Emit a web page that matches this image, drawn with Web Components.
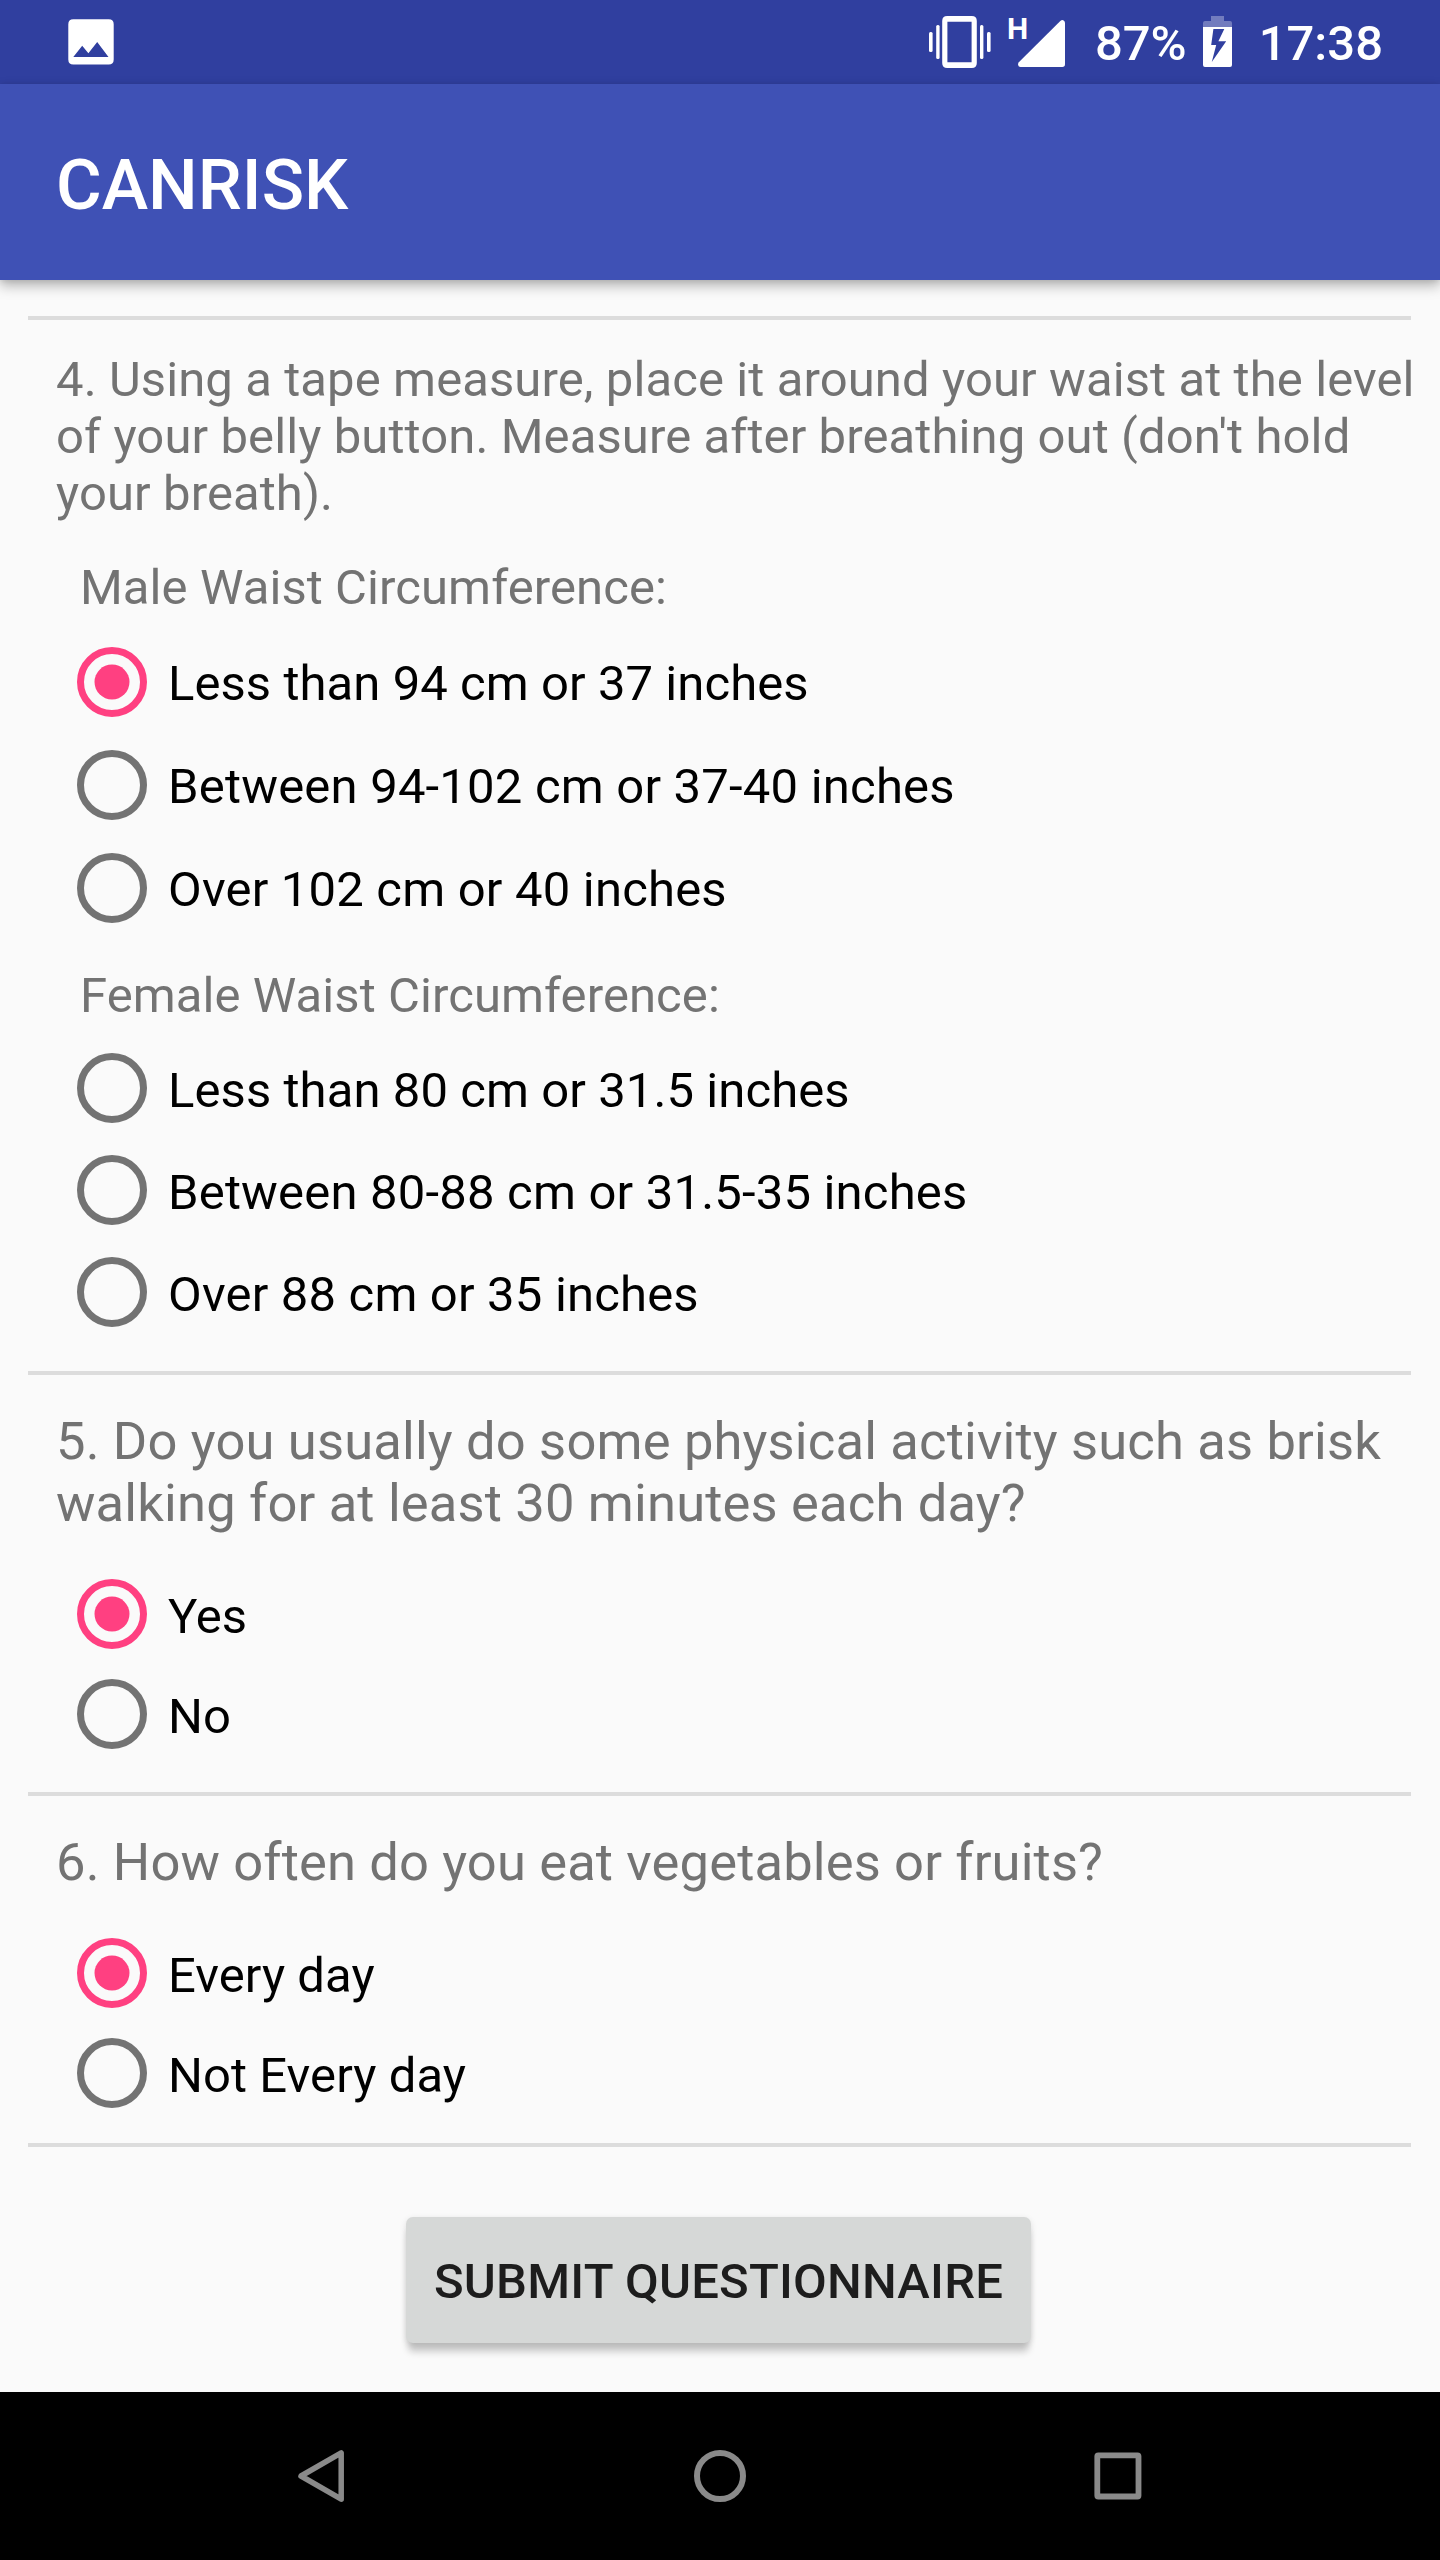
<!DOCTYPE html>
<html lang="en">
<head>
<meta charset="utf-8">
<title>CANRISK</title>
<style>
html,body{margin:0;padding:0}
body{width:1440px;height:2560px;overflow:hidden;background:#fafafa;font-family:Roboto,"Liberation Sans",sans-serif}
</style>
</head>
<body>
<phone-screen>
  <status-bar slot="status" battery="87%" time="17:38"></status-bar>
  <app-bar slot="bar">CANRISK</app-bar>
  <question-block style="--pad:31px;--tail:29px;--track:.1px">
    <span slot="title">4. Using a tape measure, place it around your waist at the level<br>of your belly button. Measure after breathing out (don't hold<br>your breath).</span>
    <radio-group label="Male Waist Circumference:" style="--top:37px;--gap:14px;--row:103px;--text:25px">
      <radio-option checked style="--track:.065px">Less than 94 cm or 37 inches</radio-option>
      <radio-option style="--track:.2px">Between 94-102 cm or 37-40 inches</radio-option>
      <radio-option style="--track:.19px">Over 102 cm or 40 inches</radio-option>
    </radio-group>
    <radio-group label="Female Waist Circumference:" style="--top:28px;--gap:12px;--row:102px">
      <radio-option style="--track:.08px">Less than 80 cm or 31.5 inches</radio-option>
      <radio-option style="--track:.19px">Between 80-88 cm or 31.5-35 inches</radio-option>
      <radio-option style="--track:.18px">Over 88 cm or 35 inches</radio-option>
    </radio-group>
  </question-block>
  <question-block style="--size:52.5px;--line:62px;--pad:35px;--tail:30px;--track:.165px">
    <span slot="title">5. Do you usually do some physical activity such as brisk<br>walking for at least 30 minutes each day?</span>
    <radio-group style="--top:28px;--track:0px">
      <radio-option checked>Yes</radio-option>
      <radio-option>No</radio-option>
    </radio-group>
  </question-block>
  <question-block style="--size:52.5px;--line:62px;--pad:35px;--tail:22px;--track:.14px">
    <span slot="title">6. How often do you eat vegetables or fruits?</span>
    <radio-group style="--top:28px;--track:.06px">
      <radio-option checked>Every day</radio-option>
      <radio-option>Not Every day</radio-option>
    </radio-group>
  </question-block>
  <section-divider></section-divider>
  <raised-button>SUBMIT QUESTIONNAIRE</raised-button>
  <nav-bar slot="nav"></nav-bar>
</phone-screen>

<script>
function define(name, html, setup) {
  const template = document.createElement('template');
  template.innerHTML = html;
  customElements.define(name, class extends HTMLElement {
    constructor() {
      super();
      this.attachShadow({ mode: 'open' }).append(template.content.cloneNode(true));
    }
    connectedCallback() {
      if (setup) setup(this, this.shadowRoot);
    }
  });
}

define('phone-screen', `
<style>
:host{display:flex;flex-direction:column;width:1440px;height:2560px;background:#fafafa}
main{flex:1;min-height:0;display:flex;flex-direction:column;padding-top:36px;box-sizing:border-box}
</style>
<slot name="status"></slot><slot name="bar"></slot><main><slot></slot></main><slot name="nav"></slot>`);

define('status-bar', `
<style>
:host{display:flex;align-items:flex-start;justify-content:space-between;height:84px;background:#303f9f;color:#fff;font-size:49px;font-weight:500;line-height:58px}
svg{display:block;flex:none}
.right{display:flex;align-items:flex-start;padding-right:57px}
.photo{margin:19px 0 0 68px}
.vibrate{margin:16px 18px 0 0}
.cell{display:flex;width:56px;margin-right:30px;padding-top:16px}
.h{width:11px;margin-left:-2px;font-size:30px;font-weight:700;line-height:26px}
.signal{margin-top:4px}
.num{padding-top:15px;white-space:nowrap}
.battery{margin:16px 27px 0 16px}
</style>
<svg class="photo" width="46" height="46" viewBox="0 0 46 46"><path fill="#fff" fill-rule="evenodd" d="M5.3 .3H40.7Q45.7 .3 45.7 5.3V40.5Q45.7 45.5 40.7 45.5H5.3Q.3 45.5 .3 40.5V5.3Q.3 .3 5.3 .3ZM5.3 38H40.5L29.2 23L20.4 34.3L14.2 26.8Z"/></svg>
<div class="right">
  <svg class="vibrate" width="62" height="52" viewBox="0 0 62 52" fill="#fff"><rect x="0" y="16" width="3.6" height="20" rx="1.5"/><rect x="7.2" y="9" width="3.4" height="34" rx="1.5"/><rect x="51" y="9" width="3.4" height="34" rx="1.5"/><rect x="58" y="16" width="3.6" height="20" rx="1.5"/><path fill-rule="evenodd" d="M18.2 0H42.8Q47.8 0 47.8 5V47Q47.8 52 42.8 52H18.2Q13.2 52 13.2 47V5Q13.2 0 18.2 0ZM18.4 5.7V46.2H42.6V5.7Z"/></svg>
  <div class="cell"><span class="h">H</span><svg class="signal" width="47" height="47" viewBox="0 0 47 47"><path fill="#fff" d="M.8 42.2L42.3 1Q44 -.4 45.6 .4Q47 1.2 47 3V44.3Q47 47 44.3 47H2.5Q.4 47 .1 45Q0 43.2 .8 42.2Z"/></svg></div>
  <span class="num" id="battery"></span>
  <svg class="battery" width="29" height="51" viewBox="0 0 29 51" fill="#fff"><path opacity=".32" d="M8 0H21V5H27Q29 5 29 7V11H0V7Q0 5 2 5H8Z"/><path fill-rule="evenodd" d="M0 11H29V49Q29 51 27 51H2Q0 51 0 49ZM10.4 13L8.2 29H13.2L8.8 46L23.2 25.2H15.4L21.3 13Z"/></svg>
  <span class="num" id="time"></span>
</div>`, (el, root) => {
  root.getElementById('battery').textContent = el.getAttribute('battery');
  root.getElementById('time').textContent = el.getAttribute('time');
});

define('app-bar', `
<style>
:host{display:flex;align-items:flex-start;height:196px;box-sizing:border-box;padding:60px 56px 0;background:#3f51b5;color:#fff;font-size:70px;font-weight:500;line-height:82px;box-shadow:0 6px 12px rgba(0,0,0,.27),0 1px 6px rgba(0,0,0,.1)}
</style>
<slot></slot>`);

define('section-divider', `
<style>:host{display:block;height:4px;margin:0 29px 0 28px;background:#dcdcdc}</style>`);

define('question-block', `
<style>
:host{display:flex;flex-direction:column;padding-bottom:var(--tail)}
.title{padding:var(--pad) 0 0 56px;color:#737373;font-size:var(--size,49px);line-height:var(--line,57px);letter-spacing:var(--track,0);white-space:nowrap}
</style>
<section-divider></section-divider>
<div class="title"><slot name="title"></slot></div>
<slot></slot>`);

define('radio-group', `
<style>
:host{display:flex;flex-direction:column;padding-top:var(--top)}
.label{padding-left:80px;margin-bottom:var(--gap);color:#737373;font-size:49px;line-height:57px;letter-spacing:.08px}
.label:empty{display:none}
</style>
<div class="label"></div>
<slot></slot>`, (el, root) => {
  root.querySelector('.label').textContent = el.getAttribute('label') || '';
  el.setAttribute('role', 'radiogroup');
});

define('radio-option', `
<style>
:host{display:flex;align-items:flex-start;gap:21px;height:var(--row,100px);padding-left:77px;color:#000;font-size:49px;line-height:57px;letter-spacing:var(--track,0)}
svg{display:block;flex:none;margin-top:17px;color:#737373}
circle.dot{display:none}
:host([checked]) svg{color:#ff4081}
:host([checked]) circle.dot{display:block}
.text{padding-top:var(--text,26px);white-space:nowrap}
</style>
<svg width="70" height="70" viewBox="0 0 70 70"><circle cx="35" cy="35" r="31.5" fill="none" stroke="currentColor" stroke-width="7"/><circle class="dot" cx="35" cy="35" r="17.5" fill="currentColor"/></svg>
<span class="text"><slot></slot></span>`, el => {
  el.setAttribute('role', 'radio');
  el.setAttribute('aria-checked', String(el.hasAttribute('checked')));
});

define('raised-button', `
<style>
:host{display:flex;justify-content:center;padding-top:70px}
button{width:625px;height:126px;margin-right:3px;padding:2px 0 0;box-sizing:border-box;border:0;border-radius:7px;background:#d6d8d7;color:#1d1d1d;font:500 49px/57px Roboto,"Liberation Sans",sans-serif;letter-spacing:.2px;white-space:nowrap;box-shadow:0 11px 7px -2px rgba(0,0,0,.19),0 2px 6px rgba(0,0,0,.12)}
</style>
<button type="button"><slot></slot></button>`);

define('nav-bar', `
<style>
:host{display:flex;align-items:center;justify-content:center;gap:344px;height:168px;background:#000}
svg{display:block}
</style>
<svg width="54" height="54" viewBox="0 0 54 54"><path d="M46.2 3.8V50.2L6 27Z" fill="none" stroke="#8a8a8a" stroke-width="5.5" stroke-linejoin="round"/></svg>
<svg width="54" height="54" viewBox="0 0 54 54"><circle cx="27" cy="27" r="23" fill="none" stroke="#8a8a8a" stroke-width="6"/></svg>
<svg width="54" height="54" viewBox="0 0 54 54"><rect x="6.3" y="6.3" width="41.2" height="41.2" rx="1" fill="none" stroke="#8a8a8a" stroke-width="5.8"/></svg>`);
</script>
</body>
</html>
